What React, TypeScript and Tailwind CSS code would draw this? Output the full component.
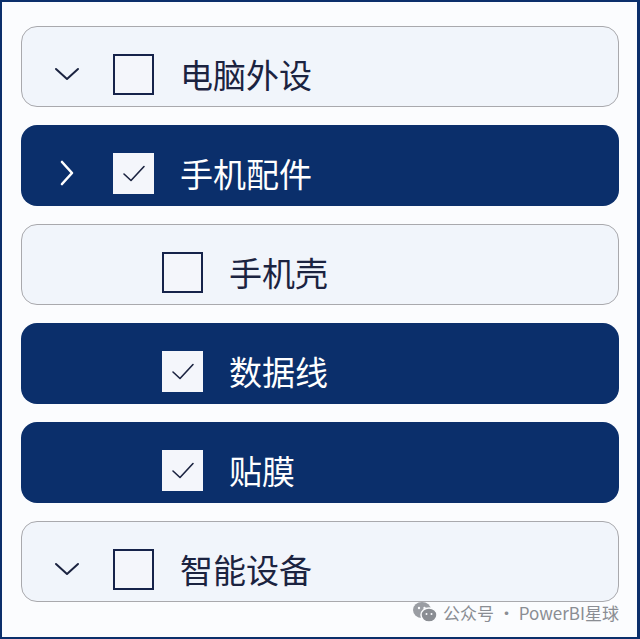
const font = { fontFamily: '"Noto Sans CJK SC", "Noto Sans", sans-serif' };

type Row = { label: string; level: 0 | 1; checked: boolean; chevron?: "down" | "right" };

const rows: Row[] = [
  { label: "电脑外设", level: 0, checked: false, chevron: "down" },
  { label: "手机配件", level: 0, checked: true, chevron: "right" },
  { label: "手机壳", level: 1, checked: false },
  { label: "数据线", level: 1, checked: true },
  { label: "贴膜", level: 1, checked: true },
  { label: "智能设备", level: 0, checked: false, chevron: "down" },
];

function Chevron({ dir, light }: { dir: "down" | "right"; light: boolean }) {
  return (
    <svg width="26" height="26" viewBox="0 0 26 26" fill="none">
      {dir === "down" ? (
        <path d="M2 8 L13 18 L24 8" stroke={light ? "#fff" : "#1b2340"} strokeWidth="2" strokeLinecap="round" strokeLinejoin="round" />
      ) : (
        <path d="M8 2 L18 13 L8 24" stroke={light ? "#fff" : "#1b2340"} strokeWidth="2.6" strokeLinecap="round" strokeLinejoin="round" />
      )}
    </svg>
  );
}

function Box({ checked }: { checked: boolean }) {
  if (checked)
    return (
      <div className="flex h-[41px] w-[41px] items-center justify-center bg-[#f4f6fb]">
        <svg width="28" height="28" viewBox="0 0 28 28" fill="none">
          <path d="M4 15 L11 21.5 L24 7.5" stroke="#1b2340" strokeWidth="1.6" strokeLinecap="round" strokeLinejoin="round" />
        </svg>
      </div>
    );
  return <div className="h-[41px] w-[41px] border-2 border-[#16234a] bg-[#f4f6fb]" />;
}

export default function App() {
  return (
    <div className="relative h-[639px] w-[640px] border-2 border-r-[3px] border-[#0b2f6b] bg-[#fbfcfe] pl-[19px] pr-[18px] pt-6" style={font}>
      <div className="flex flex-col gap-[18px]">
        {rows.map((r) => {
          const on = r.checked;
          return (
            <div
              key={r.label}
              className={
                "flex h-[81px] items-center rounded-[16px] pt-[15px] " +
                (on ? "bg-[#0b2f6b] text-white" : "border border-[#a9a9ad] bg-[#f1f5fb] text-[#1b2340]")
              }
            >
              <div className={"flex w-[92px] justify-center " + (r.level === 1 ? "invisible" : "") + (on ? "" : " -ml-px")}>
                {r.chevron && <Chevron dir={r.chevron} light={on} />}
              </div>
              <div className={r.level === 1 ? "ml-[49px]" : ""}>
                <Box checked={on} />
              </div>
              <span className="ml-[26px] text-[33px] leading-none">{r.label}</span>
            </div>
          );
        })}
      </div>
      <div className="absolute bottom-[12px] right-[18px] flex items-center gap-[5px] text-[17px] text-[#8a8d93]">
        <svg width="26" height="22" viewBox="0 0 26 22">
          <ellipse cx="10" cy="9" rx="9" ry="8" fill="#9a9da3" />
          <ellipse cx="17" cy="14" rx="8" ry="7" fill="#8a8d93" stroke="#fbfcfe" strokeWidth="1.5" />
          <circle cx="7" cy="7" r="1.2" fill="#fbfcfe" />
          <circle cx="12.5" cy="7" r="1.2" fill="#fbfcfe" />
          <circle cx="14.5" cy="13" r="1" fill="#fbfcfe" />
          <circle cx="19.5" cy="13" r="1" fill="#fbfcfe" />
        </svg>
        <span>公众号 · PowerBI星球</span>
      </div>
    </div>
  );
}
